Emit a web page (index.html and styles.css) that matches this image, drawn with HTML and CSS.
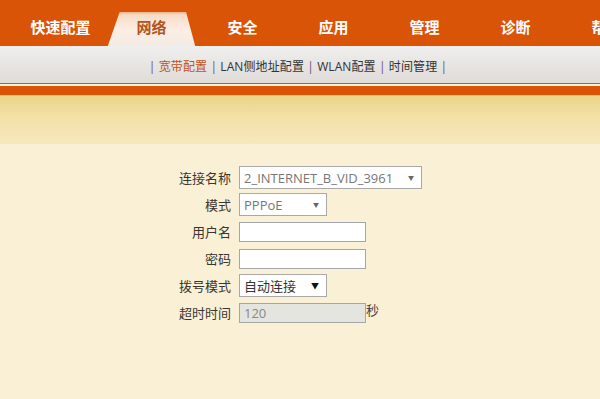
FILE: index.html
```html
<!DOCTYPE html>
<html lang="zh-CN">
<head>
    <meta charset="UTF-8">
    <meta name="viewport" content="width=device-width, initial-scale=1.0">
    <title>宽带配置</title>
    <link rel="stylesheet" href="styles.css">
</head>
<body>
    <div class="header">
        <ul class="tabs">
            <li>快速配置</li>
            <li class="active">网络</li>
            <li>安全</li>
            <li>应用</li>
            <li>管理</li>
            <li>诊断</li>
            <li>帮助</li>
        </ul>
    </div>
    <div class="subnav">
        <span class="sep">|</span> <a class="current">宽带配置</a>
        <span class="sep">|</span> <a>LAN侧地址配置</a>
        <span class="sep">|</span> <a>WLAN配置</a>
        <span class="sep">|</span> <a>时间管理</a>
        <span class="sep">|</span>
    </div>
    <div class="strip"></div>
    <div class="band"></div>
    <div class="content">
        <form class="form">
            <label for="connName">连接名称</label>
            <div class="field">
                <span class="select-wrap wide">
                    <select id="connName"><option>2_INTERNET_B_VID_3961</option></select>
                </span>
            </div>

            <label for="mode">模式</label>
            <div class="field">
                <span class="select-wrap">
                    <select id="mode"><option>PPPoE</option></select>
                </span>
            </div>

            <label for="username">用户名</label>
            <div class="field"><input type="text" id="username"></div>

            <label for="password">密码</label>
            <div class="field"><input type="password" id="password"></div>

            <label for="dialMode">拨号模式</label>
            <div class="field">
                <span class="select-wrap dark">
                    <select id="dialMode"><option>自动连接</option></select>
                </span>
            </div>

            <label for="timeout">超时时间</label>
            <div class="field">
                <input type="text" id="timeout" class="disabled" value="120" disabled><span class="unit">秒</span>
            </div>
        </form>
    </div>
</body>
</html>
```

FILE: styles.css
```css
body {
    margin: 0;
    font-family: "Open Sans", "Noto Sans CJK SC", sans-serif;
    background: #faf0d6;
    color: #333;
    overflow: hidden;
}
.header {
    height: 46px;
    background: #d95407;
    overflow: hidden;
}
.tabs {
    list-style: none;
    margin: 0;
    padding: 0 0 0 15px;
    display: flex;
    white-space: nowrap;
}
.tabs li {
    flex: 0 0 91px;
    height: 34px;
    margin-top: 12px;
    line-height: 30px;
    text-align: center;
    color: #fff;
    font-size: 15px;
    font-weight: bold;
}
.tabs li.active {
    color: #b4551f;
    background: linear-gradient(#e9b58e 0, #f7dcc6 3px, #fbeee4 55%, #f3ebe5 100%);
    clip-path: polygon(15% 0, 88% 0, 98% 100%, 2% 100%);
}
.subnav {
    height: 37px;
    line-height: 42px;
    text-align: center;
    padding-right: 4px;
    font-size: 12px;
    letter-spacing: 0.1px;
    background: linear-gradient(#f1efed, #dedbd8);
    border-bottom: 1px solid #8d6a58;
    white-space: nowrap;
}
.subnav a {
    color: #333;
}
.subnav a.current {
    color: #c2521c;
}
.subnav .sep {
    color: #6b4d86;
}
.strip {
    height: 9px;
    margin-top: 2px;
    background: #d95407;
    border-bottom: 1px solid #edb48c;
}
.band {
    height: 48px;
    background: linear-gradient(#ead487, #f3e1a8 45%, #f7e8bd);
}
.content {
    padding-top: 20px;
}
.form {
    display: grid;
    grid-template-columns: 231px auto;
    grid-auto-rows: 27px;
    column-gap: 8px;
    align-items: center;
}
.form label {
    text-align: right;
    font-size: 13px;
    color: #3a3530;
}
.field {
    display: flex;
    align-items: center;
}
.select-wrap {
    position: relative;
    display: inline-block;
}
.select-wrap::after {
    content: "\25BC";
    position: absolute;
    right: 8px;
    top: 7px;
    font-size: 6px;
    color: #666;
    pointer-events: none;
}
.select-wrap.dark::after {
    color: #111;
    font-size: 8px;
    top: 6px;
}
select {
    appearance: none;
    -webkit-appearance: none;
    width: 88px;
    height: 23px;
    padding: 0 0 0 4px;
    border: 1px solid #a9a9a9;
    border-radius: 0;
    background: #fff;
    color: #777;
    font-family: inherit;
    font-size: 13px;
}
.select-wrap.wide select {
    width: 183px;
}
.select-wrap.dark select {
    color: #333;
}
input {
    box-sizing: border-box;
    width: 127px;
    height: 20px;
    border: 1px solid #a3a7ab;
    border-radius: 0;
    background: #fff;
    padding: 0 4px;
    font-family: inherit;
    font-size: 13px;
}
input.disabled {
    background: #e5e5df;
    color: #888;
}
.unit {
    font-size: 13px;
    color: #444;
    margin-top: -6px;
}
```
